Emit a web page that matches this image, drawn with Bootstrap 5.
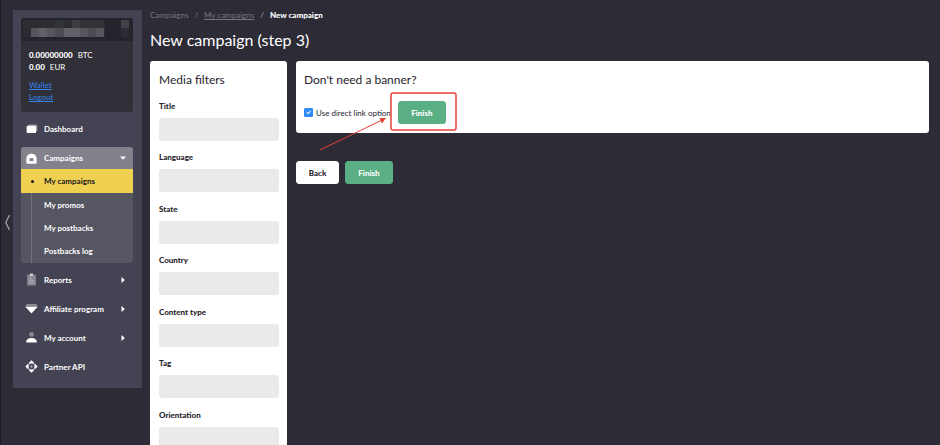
<!DOCTYPE html>
<html lang="en">
<head>
<meta charset="utf-8">
<meta name="viewport" content="width=device-width, initial-scale=1">
<title>New campaign</title>
<link href="https://cdn.jsdelivr.net/npm/bootstrap@5.3.0/dist/css/bootstrap.min.css" rel="stylesheet">
<style>
  body { background: #2d2b36; color: #fff; font: 8px/12px Lato, "Liberation Sans", sans-serif; }
  button, input { font-family: inherit; }

  .gutter { width: 13px; border-left: 1px solid #1d1b25; }
  .gutter svg { width: 6px; height: 18px; }

  .sidebar { width: 129px; background: #444353; padding: 8px 9px 7px 8px; margin-top: 10px; }
  .account { background: #312f38; border-radius: 3px; height: 94px; margin-bottom: 2px; overflow: hidden; }
  .account-name { background: #25242d; height: 23px; padding: 2px; }
  .account-name svg { width: 106px; height: 17px; }
  .account-body { padding: 8px; }
  .account-body a { color: #3385f0; display: block; width: max-content; line-height: 12px; }
  .balance { margin-bottom: 6px; }
  .balance b { font-weight: 900; margin-right: 5px; }

  .menu-item { height: 29px; padding: 0 7px 0 4px; color: #fff; font-size: 8px; font-weight: 700; text-decoration: none; border: 0; background: none; width: 100%; text-align: left; }
  .menu-item .glyph { width: 13px; height: 13px; margin-right: 6px; flex: none; }
  .menu-item .caret { width: 6px; height: 6px; margin-left: auto; flex: none; }
  .group { margin: 4px 0 2px; border-radius: 3px; overflow: hidden; background: #565562; }
  .group .menu-item { height: 22px; background: #83828c; }
  .submenu a { height: 23px; color: #fff; font-weight: 700; text-decoration: none; padding-left: 12px; margin-left: 10px; border-left: 1px solid #73727d; }
  .submenu a.current { height: 24px; background: #f0d050; color: #16141c; margin-left: 0; border: 0; padding-left: 0; }
  .current::before { content: ""; width: 3px; height: 3px; border-radius: 50%; background: #16141c; margin: 0 10px; }
  .submenu a:last-child { height: 24px; }

  .page { padding: 9px 11px 0 8px; }
  .breadcrumb { --bs-breadcrumb-divider-color: #85848d; --bs-breadcrumb-item-padding-x: 6px; font-size: 8px; line-height: 12px; }
  .breadcrumb-item, .breadcrumb-item a { color: #77767f; }
  .breadcrumb-item.active { color: #fff; font-weight: 900; }
  .page-title { font-size: 16px; line-height: 20px; margin: 9px 0 11px; font-weight: 400; }

  .panel { background: #fff; color: #26242c; border-radius: 3px; padding: 0 8px 0 9px; }
  .panel h2 { font-size: 12px; line-height: 16px; font-weight: 400; margin: 0; padding-top: 11px; }
  .filters { width: 137px; }
  .filters form { padding-top: 12px; }
  .field { margin-bottom: 10px; }
  .field:nth-child(even) { margin-bottom: 11px; }
  .field label { display: block; font-weight: 900; line-height: 12px; margin-bottom: 6px; }
  .field input { display: block; width: 100%; height: 23px; border: 0; border-radius: 3px; background: #eaeaea; padding: 0 6px; font-size: 8px; }

  .columns { gap: 9px; }
  .direct { height: 72px; padding-left: 8px; }
  .direct-row { gap: 7px; margin-top: 13px; }
  .direct-row .form-check-input { width: 9px; height: 9px; margin: 0 3px 0 0; border-radius: 1px; flex: none; }
  .direct-row .form-check-input:checked { background-color: #318bf5; border-color: #318bf5; }
  .btn { --bs-btn-font-size: 8px; --bs-btn-line-height: 12px; --bs-btn-font-weight: 900; --bs-btn-padding-x: 0; --bs-btn-padding-y: 0; --bs-btn-border-radius: 3px; height: 23px; }
  .btn-finish { width: 48px; --bs-btn-bg: #5aaf85; --bs-btn-color: #fff; --bs-btn-border-color: #5aaf85; --bs-btn-hover-bg: #4b9c74; --bs-btn-hover-color: #fff; }
  .btn-back { width: 43px; --bs-btn-bg: #fff; --bs-btn-color: #26242c; --bs-btn-border-color: #fff; --bs-btn-hover-bg: #eee; }
  .actions { gap: 6px; margin-top: 28px; }
  /* highlight frame and pointer drawn over the button */
  .callout { position: absolute; left: -80px; top: -9px; width: 140px; height: 62px; pointer-events: none; }
</style>
</head>
<body>
<div class="d-flex vh-100 overflow-hidden align-items-start">
  <div class="gutter h-100 flex-shrink-0 d-flex align-items-center">
    <button type="button" class="btn p-0 border-0 lh-1 ps-1" aria-label="Collapse sidebar">
      <svg viewBox="0 0 6 18" fill="none" stroke="#aaa9b0" stroke-width="1.2"><path d="M4.500 1 .8 8.500l3.700 7.500"/></svg>
    </button>
  </div>

  <aside class="sidebar flex-shrink-0">
    <div class="account">
      <div class="account-name">
        <svg viewBox="0 0 106 17" shape-rendering="crispEdges" aria-hidden="true">
          <path fill="#2c2c32" d="M0 0h82v17H0z"/><path fill="#313438" d="M32 0h8v8h-8z"/><path fill="#3d3c43" d="M49 0h8v8h-8z"/><path fill="#333239" d="M57 0h24v8H57z"/>
          <path fill="#57565c" d="M8 8h73v9H8z"/><path fill="#626167" d="M16 8h8v9h-8zM41 8h16v9H41z"/><path fill="#4c4b51" d="M32 8h9v9h-9zM65 8h8v9h-8z"/>
          <path fill="#404046" d="M98 0h8v8h-8z"/><path fill="#2d2d35" d="M98 8h8v9h-8z"/>
        </svg>
      </div>
      <div class="account-body">
        <div class="balance">
          <div><b>0.00000000</b>BTC</div>
          <div><b>0.00</b>EUR</div>
        </div>
        <a href="#wallet">Wallet</a>
        <a href="#logout">Logout</a>
      </div>
    </div>

    <nav aria-label="Main">
      <a class="menu-item d-flex align-items-center" href="#dashboard">
        <svg class="glyph" viewBox="0 0 12 12"><path fill="#8f8e98" d="M3 2.200h7.500a1 1 0 0 1 1 1v5H10V4H3z"/><rect x="1.500" y="3.500" width="8.800" height="6.700" rx="1" fill="#fff"/></svg>
        Dashboard
      </a>
      <div class="group">
        <button type="button" class="menu-item d-flex align-items-center" aria-expanded="true">
          <svg class="glyph" viewBox="0 0 12 12"><path fill="#fff" fill-rule="evenodd" d="M6 1.300 9.300 2.600 10.700 5v5a.9.900 0 0 1-.9.900H2.200a.9.900 0 0 1-.9-.9V5l1.400-2.400zM4.200 5.800v2.400h3.600V5.800z"/><path fill="#77767f" d="M4.800 6.300h2.400v1.300H4.800z"/></svg>
          Campaigns
          <svg class="caret" viewBox="0 0 6 6"><path fill="#fff" d="M0 1.500h6L3 4.800z"/></svg>
        </button>
        <div class="submenu">
          <a class="current d-flex align-items-center" href="#campaigns" aria-current="page">My campaigns</a>
          <a class="d-flex align-items-center" href="#promos">My promos</a>
          <a class="d-flex align-items-center" href="#postbacks">My postbacks</a>
          <a class="d-flex align-items-center" href="#log">Postbacks log</a>
        </div>
      </div>
      <button type="button" class="menu-item d-flex align-items-center">
        <svg class="glyph" viewBox="0 0 12 12"><path fill="#8a8993" d="M2 1.500h8v10H2z"/><path fill="#d0cfd5" d="M4.600.5h2.800v2.300H4.600z"/><path stroke="#b2b1b9" stroke-width=".8" d="M3.800 5.300h2.700M3.800 7.200h4.400M3.800 9h4.400"/></svg>
        Reports
        <svg class="caret" viewBox="0 0 6 6"><path fill="#fff" d="M1.500 0v6L4.800 3z"/></svg>
      </button>
      <button type="button" class="menu-item d-flex align-items-center">
        <svg class="glyph" viewBox="0 0 12 12"><path fill="#8a8993" d="M1.500 1.800h9l1.200 2.600H.3z"/><path fill="#fff" d="M.3 4.400h11.400L6 10.500z"/></svg>
        Affiliate program
        <svg class="caret" viewBox="0 0 6 6"><path fill="#fff" d="M1.500 0v6L4.800 3z"/></svg>
      </button>
      <button type="button" class="menu-item d-flex align-items-center">
        <svg class="glyph" viewBox="0 0 12 12"><circle cx="6" cy="3.200" r="2.200" fill="#8a8993"/><path fill="#fff" d="M1.200 10.500V9.800c0-4.600 9.600-4.600 9.600 0v.7z"/></svg>
        My account
        <svg class="caret" viewBox="0 0 6 6"><path fill="#fff" d="M1.500 0v6L4.800 3z"/></svg>
      </button>
      <a class="menu-item d-flex align-items-center" href="#api">
        <svg class="glyph" viewBox="0 0 12 12"><path fill="#fff" d="M6 .3 8.600 2.800 7.400 4H4.600L3.400 2.800zM6 11.700 8.600 9.200 7.400 8H4.600L3.400 9.200zM.3 6l2.500-2.600L4 4.600v2.800L2.800 8.600zM11.700 6 9.200 3.400 8 4.600v2.800l1.200 1.200z"/><circle cx="6" cy="6" r="2.700" fill="#444353"/><circle cx="6" cy="6" r="3.200" fill="none" stroke="#c4c3c9" stroke-width=".6"/><circle cx="6" cy="6" r="1.100" fill="#a5a4ad"/></svg>
        Partner API
      </a>
    </nav>
  </aside>

  <main class="page flex-grow-1">
    <nav aria-label="Breadcrumb">
      <ol class="breadcrumb mb-0">
        <li class="breadcrumb-item">Campaigns</li>
        <li class="breadcrumb-item"><a href="#campaigns">My campaigns</a></li>
        <li class="breadcrumb-item active" aria-current="page">New campaign</li>
      </ol>
    </nav>
    <h1 class="page-title">New campaign (step 3)</h1>

    <div class="columns d-flex align-items-start">
      <section class="panel filters flex-shrink-0">
        <h2>Media filters</h2>
        <form>
          <div class="field"><label for="f-title">Title</label><input id="f-title" type="text"></div>
          <div class="field"><label for="f-language">Language</label><input id="f-language" type="text"></div>
          <div class="field"><label for="f-state">State</label><input id="f-state" type="text"></div>
          <div class="field"><label for="f-country">Country</label><input id="f-country" type="text"></div>
          <div class="field"><label for="f-content">Content type</label><input id="f-content" type="text"></div>
          <div class="field"><label for="f-tag">Tag</label><input id="f-tag" type="text"></div>
          <div class="field"><label for="f-orientation">Orientation</label><input id="f-orientation" type="text"></div>
        </form>
      </section>

      <div class="flex-grow-1">
        <section class="panel direct">
          <h2>Don't need a banner?</h2>
          <div class="direct-row d-flex align-items-center">
            <div class="d-flex align-items-center">
              <input class="form-check-input" type="checkbox" id="direct" checked>
              <label for="direct">Use direct link option</label>
            </div>
            <div class="position-relative">
              <button type="button" class="btn btn-finish">Finish</button>
              <svg class="callout" viewBox="0 0 140 62" fill="none" stroke="#e8403a" aria-hidden="true">
                <rect x="73" y="1" width="65" height="37" rx="2" stroke-width="1.500"/>
                <path d="M2 58 63 28.500"/><path fill="#e8403a" stroke="none" d="M68 26l-4 5.500-2.500-5.500z"/>
              </svg>
            </div>
          </div>
        </section>
        <div class="actions d-flex">
          <button type="button" class="btn btn-back">Back</button>
          <button type="button" class="btn btn-finish">Finish</button>
        </div>
      </div>
    </div>
  </main>
</div>
<script src="https://cdn.jsdelivr.net/npm/bootstrap@5.3.0/dist/js/bootstrap.bundle.min.js"></script>
</body>
</html>
